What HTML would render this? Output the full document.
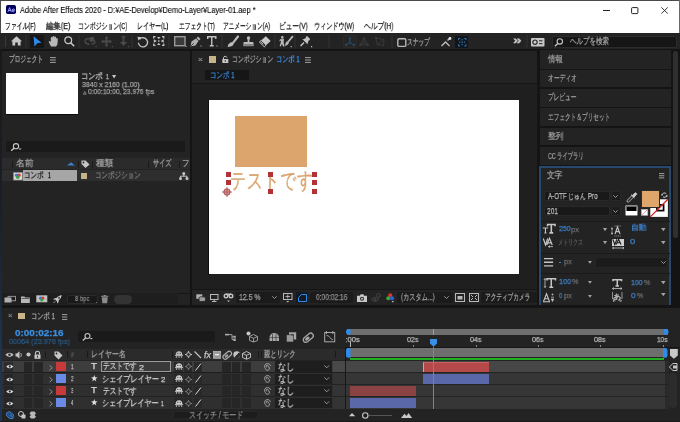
<!DOCTYPE html>
<html lang="ja"><head><meta charset="utf-8">
<style>
*{box-sizing:border-box;margin:0;padding:0}
html,body{width:680px;height:422px;overflow:hidden;background:#141414;font-family:"Liberation Sans",sans-serif;}
.a{position:absolute}
.t{position:absolute;white-space:nowrap;line-height:1;transform-origin:0 0;left:0;top:0;will-change:transform;-webkit-text-stroke:0.25px currentColor}
svg{position:absolute;overflow:visible}
</style></head><body>
<div class="a" style="left:0px;top:0px;width:680px;height:33px;background:#fff;"></div>
<div class="a" style="left:0px;top:0px;width:680px;height:1px;background:#4a4a4a;"></div>
<div class="a" style="left:0px;top:0px;width:1px;height:33px;background:#4a4a4a;"></div>
<div class="a" style="left:678.5px;top:0px;width:1.5px;height:33px;background:#6a6a6a;"></div>
<div class="a" style="left:602.6px;top:9.5px;width:7px;height:1px;background:#222;"></div>
<svg style="left:631.3px;top:6.5px;" width="7.5" height="7" viewBox="0 0 7.5 7"><rect x="0.6" y="0.6" width="6.3" height="6" rx="0.8" fill="none" stroke="#222" stroke-width="1"></rect></svg>
<svg style="left:660.8px;top:6.5px;" width="7.2" height="7" viewBox="0 0 7.2 7"><path d="M0.4 0.4 L6.8 6.6 M6.8 0.4 L0.4 6.6" stroke="#222" stroke-width="0.9"></path></svg>
<div class="a" style="left:6px;top:4.7px;width:10.3px;height:9.7px;background:#00005b;border-radius:1.8px"></div>
<svg style="left:6px;top:4.7px;" width="10" height="10" viewBox="0 0 10 10"><path d="M1.9 6.9 L3.6 2.6 L5.3 6.9 M2.5 5.5 H4.7" stroke="#9d9dff" stroke-width="1" fill="none"></path><path d="M6 5.4 H8.7 A1.35 1.45 0 1 0 8.22 6.51" stroke="#9d9dff" stroke-width="0.9" fill="none"></path></svg>
<div class="t" style="color: rgb(0, 0, 0); -webkit-text-stroke: 0.1px rgb(0, 0, 0); font-size: 8.6px; left: 20px; top: 6.0201px; transform: scaleX(0.856327);">Adobe After Effects 2020 - D:¥AE-Develop¥Demo-Layer¥Layer-01.aep *</div>
<div class="t" style="color: rgb(26, 26, 26); font-size: 8.8px; left: 5.42927px; top: 21.5508px; transform: scaleX(0.648559);">ファイル(F)</div>
<div class="t" style="color: rgb(26, 26, 26); font-size: 8.8px; left: 45.7723px; top: 21.5508px; transform: scaleX(0.82205);">編集(E)</div>
<div class="t" style="color: rgb(26, 26, 26); font-size: 8.8px; left: 78.1351px; top: 21.5508px; transform: scaleX(0.655187);">コンポジション(C)</div>
<div class="t" style="color: rgb(26, 26, 26); font-size: 8.8px; left: 137.175px; top: 21.5508px; transform: scaleX(0.669873);">レイヤー(L)</div>
<div class="t" style="color: rgb(26, 26, 26); font-size: 8.8px; left: 178.608px; top: 21.5508px; transform: scaleX(0.635972);">エフェクト(T)</div>
<div class="t" style="color: rgb(26, 26, 26); font-size: 8.8px; left: 223.446px; top: 21.5508px; transform: scaleX(0.629792);">アニメーション(A)</div>
<div class="t" style="color: rgb(26, 26, 26); font-size: 8.8px; left: 278.758px; top: 21.5508px; transform: scaleX(0.742901);">ビュー(V)</div>
<div class="t" style="color: rgb(26, 26, 26); font-size: 8.8px; left: 314.284px; top: 21.5508px; transform: scaleX(0.677974);">ウィンドウ(W)</div>
<div class="t" style="color: rgb(26, 26, 26); font-size: 8.8px; left: 364px; top: 21.5508px; transform: scaleX(0.749789);">ヘルプ(H)</div>
<div class="a" style="left:0px;top:33px;width:680px;height:16px;background:#232323;"></div>
<div class="a" style="left:4.5px;top:36px;width:1.5px;height:11px;background:#3a3a3a;"></div>
<div class="a" style="left:25px;top:35px;width:2px;height:12.5px;background:#2a2a2a;"></div>
<div class="a" style="left:78px;top:35px;width:2px;height:12.5px;background:#2a2a2a;"></div>
<div class="a" style="left:131px;top:35px;width:2px;height:12.5px;background:#2a2a2a;"></div>
<div class="a" style="left:168px;top:35px;width:2px;height:12.5px;background:#2a2a2a;"></div>
<div class="a" style="left:221px;top:35px;width:2px;height:12.5px;background:#2a2a2a;"></div>
<div class="a" style="left:274px;top:35px;width:2px;height:12.5px;background:#2a2a2a;"></div>
<div class="a" style="left:294px;top:35px;width:2px;height:12.5px;background:#2a2a2a;"></div>
<div class="a" style="left:328px;top:35px;width:2px;height:12.5px;background:#2a2a2a;"></div>
<div class="a" style="left:391px;top:35px;width:2px;height:12.5px;background:#2a2a2a;"></div>
<div class="a" style="left:526px;top:35px;width:2px;height:12.5px;background:#2a2a2a;"></div>
<div class="a" style="left:30px;top:34.5px;width:14px;height:13px;background:#161616;border-radius:1px"></div>
<div class="a" style="left:343px;top:35px;width:13.5px;height:13px;background:#262626;border-radius:2px;border:1px solid #2c2c2c"></div>
<div class="a" style="left:455px;top:35.5px;width:12.5px;height:12px;background:#0e151d;border-radius:1px"></div>
<svg style="left:11px;top:36px;" width="12" height="10" viewBox="0 0 12 10"><path d="M5.5 0.3 L11 5.2 L9.6 5.2 L9.6 9.6 L6.8 9.6 L6.8 6.5 L4.2 6.5 L4.2 9.6 L1.4 9.6 L1.4 5.2 L0 5.2 Z" fill="#c6c6c6"></path></svg>
<svg style="left:33px;top:36px;" width="9" height="11" viewBox="0 0 9 11"><path d="M0.5 0.3 L8.5 6.8 L4.6 6.9 L1.5 10.5 Z" fill="#2d8ceb"></path></svg>
<svg style="left:47.5px;top:36px;" width="11" height="11" viewBox="0 0 11 11"><path d="M3 10.5 L1 6.5 Q0.3 5.3 1.3 5 Q2 4.9 2.8 6 L2.8 2 Q2.8 1 3.6 1 Q4.3 1 4.4 2 L4.5 0.9 Q4.6 0 5.4 0 Q6.2 0 6.2 1 L6.3 1.2 Q6.5 0.4 7.2 0.5 Q8 0.6 8 1.5 L8.1 2.5 Q8.4 1.8 9.1 1.9 Q9.9 2.1 9.8 3 L9.6 7 Q9.4 9.5 8 10.5 Z" fill="#b8b8b8"></path></svg>
<svg style="left:64px;top:36px;" width="11" height="11" viewBox="0 0 11 11"><circle cx="4.2" cy="4.2" r="3.4" fill="none" stroke="#c6c6c6" stroke-width="1.3"></circle><path d="M6.6 6.6 L10.2 10.2" stroke="#c6c6c6" stroke-width="1.5"></path></svg>
<svg style="left:83.5px;top:35.5px;" width="13" height="11.5" viewBox="0 0 13 11.5"><circle cx="7.8" cy="3.3" r="2.6" fill="#4a4a4a"></circle><path d="M5 2.5 Q1 2.5 1 5 Q1 7.5 5 8 M7.5 8.2 Q11 8 11 6 Q11 5 10 4.5" fill="none" stroke="#4a4a4a" stroke-width="1.3"></path><path d="M3.5 6.8 L5.8 8 L3.8 9.6 Z" fill="#4a4a4a"></path><rect x="11.5" y="10" width="1.2" height="1.2" fill="#4a4a4a"></rect></svg>
<svg style="left:100.5px;top:35.5px;" width="12" height="11.5" viewBox="0 0 12 11.5"><path d="M5.5 1.5 V9.5 M1.5 5.5 H9.5" stroke="#4a4a4a" stroke-width="1.8"></path><path d="M5.5 0 L7.3 2.2 H3.7 Z M5.5 11 L7.3 8.8 H3.7 Z M0 5.5 L2.2 3.7 V7.3 Z M11 5.5 L8.8 3.7 V7.3 Z" fill="#4a4a4a"></path><rect x="10.8" y="10" width="1.2" height="1.2" fill="#4a4a4a"></rect></svg>
<svg style="left:118.5px;top:35.5px;" width="11" height="11.5" viewBox="0 0 11 11.5"><path d="M4.5 0.8 V7" stroke="#4a4a4a" stroke-width="1.8"></path><path d="M2.5 0.8 H6.5" stroke="#4a4a4a" stroke-width="1.2"></path><path d="M0.8 6 H8.2 L4.5 9.8 Z" fill="#4a4a4a"></path><rect x="9" y="10" width="1.2" height="1.2" fill="#4a4a4a"></rect></svg>
<svg style="left:137px;top:36px;" width="12" height="11" viewBox="0 0 12 11"><path d="M2.6 3.2 A4.6 4.6 0 1 1 1.4 6.8" fill="none" stroke="#c6c6c6" stroke-width="1.3"></path><path d="M0.5 0.8 L4.6 1.2 L1.3 4.6 Z" fill="#c6c6c6"></path></svg>
<svg style="left:153px;top:36px;" width="11.5" height="10" viewBox="0 0 11.5 10"><path d="M0.7 2.5 V0.7 H2.5 M9 0.7 H10.8 V2.5 M0.7 7.5 V9.3 H2.5 M9 9.3 H10.8 V7.5" stroke="#c4c4c4" stroke-width="1.2" fill="none"></path><path d="M5.75 3.2 L4 1 H7.5 Z M5.75 6.8 L4 9 H7.5 Z M3.8 5 L0.8 3.3 V6.7 Z M7.7 5 L10.7 3.3 V6.7 Z" fill="#c4c4c4"></path><rect x="5" y="4.3" width="1.5" height="1.4" fill="#c4c4c4"></rect></svg>
<svg style="left:173.5px;top:36px;" width="13" height="11" viewBox="0 0 13 11"><rect x="0.7" y="0.7" width="10.3" height="9" fill="#3a3a3a" stroke="#9a9a9a" stroke-width="1.4"></rect><rect x="11.6" y="9.8" width="1" height="1" fill="#c6c6c6"></rect></svg>
<svg style="left:190px;top:36px;" width="12" height="11" viewBox="0 0 12 11"><path d="M0.5 10.5 L1.5 5.5 L6 2.5 L8.5 5 L5.5 9.5 Z" fill="#b0b0b0"></path><path d="M6.5 2 L8 0.5 L10.5 3 L9 4.5 Z" fill="#b0b0b0"></path><path d="M0.8 10.2 L3.8 7.2" stroke="#232323" stroke-width="0.8"></path><rect x="10.5" y="9.5" width="1" height="1" fill="#c6c6c6"></rect></svg>
<svg style="left:207px;top:36px;" width="11" height="11" viewBox="0 0 11 11"><path d="M0.7 3 V0.7 H8.8 V3 M4.75 0.7 V9.8 M2.8 9.8 H6.7" stroke="#c0c0c0" stroke-width="1.4" fill="none"></path><rect x="9.5" y="9.5" width="1" height="1" fill="#c6c6c6"></rect></svg>
<svg style="left:226.5px;top:35.5px;" width="12" height="11" viewBox="0 0 12 11"><path d="M11 0.5 L6.2 6.6" stroke="#bcbcbc" stroke-width="2.2" stroke-linecap="round"></path><path d="M5 6 L6.8 7.6 Q6.5 10 3.8 10.6 L0.5 11 L1.6 8.2 Q2.8 6.3 5 6 Z" fill="#bcbcbc"></path></svg>
<svg style="left:243px;top:35.5px;" width="11" height="10.5" viewBox="0 0 11 10.5"><circle cx="5.5" cy="2" r="1.7" fill="#bcbcbc"></circle><path d="M4.6 3 H6.4 V6 H4.6 Z" fill="#bcbcbc"></path><path d="M0.8 6 H10.2 L10.8 8.4 H0.2 Z" fill="#bcbcbc"></path><rect x="0.2" y="8.4" width="10.6" height="1.8" fill="#8a8a8a"></rect></svg>
<svg style="left:258.5px;top:35.5px;" width="12" height="11" viewBox="0 0 12 11"><path d="M6.8 0.3 L11.7 5 L5.3 10.8 L0.4 6.1 Z" fill="#c8c8c8"></path><path d="M2.2 4.4 L7.1 9.1 L5.3 10.8 L0.4 6.1 Z" fill="#232323" stroke="#c8c8c8" stroke-width="0.9"></path><path d="M1.8 5.8 L4.3 8.2" stroke="#c8c8c8" stroke-width="0.9"></path></svg>
<svg style="left:278.5px;top:35.5px;" width="15" height="11.5" viewBox="0 0 15 11.5"><circle cx="3.3" cy="1.4" r="1.3" fill="#b8b8b8"></circle><path d="M1 3.2 L5 3 L4.6 6.3 L5.6 10.5 L4 10.5 L3 7.8 L1.8 10.5 L0.6 10 L1.8 6.5 L1.9 4.6 L0.2 5.6 Z" fill="#b8b8b8"></path><path d="M13.5 0.6 L9.2 5.8" stroke="#b8b8b8" stroke-width="1.8" stroke-linecap="round"></path><path d="M8.3 5.3 L9.9 6.6 Q9.8 8.8 7.4 9.4 L5.8 9.8 L6.5 7.6 Q7 5.8 8.3 5.3 Z" fill="#b8b8b8"></path><rect x="11.6" y="10" width="1.2" height="1.2" fill="#b8b8b8"></rect></svg>
<svg style="left:299.5px;top:35.5px;" width="13" height="11.5" viewBox="0 0 13 11.5"><path d="M5.8 0.5 Q6.8 -0.2 7.6 0.6 L9.6 2.6 Q10.4 3.4 9.6 4.2 L8.6 4.6 L7.6 7.4 L7.8 8.6 L2.2 3 L3.4 3.2 L6 2 Z" fill="#c4c4c4"></path><path d="M4 6.5 L0.5 10" stroke="#c4c4c4" stroke-width="1.4"></path><rect x="11" y="10" width="1.2" height="1.2" fill="#c4c4c4"></rect></svg>
<svg style="left:344.5px;top:36.5px;" width="10" height="9" viewBox="0 0 10 9"><path d="M5 1 V5.5 L1 8 M5 5.5 L9 8" stroke="#28507a" stroke-width="0.9" fill="none"></path><circle cx="5" cy="1.2" r="1" fill="#28507a"></circle><circle cx="1" cy="8" r="1" fill="#28507a"></circle><circle cx="9" cy="8" r="1" fill="#28507a"></circle><circle cx="5" cy="5.5" r="0.8" fill="#28507a"></circle></svg>
<svg style="left:359px;top:36.5px;" width="10" height="9" viewBox="0 0 10 9"><path d="M5 1 L1 8 H9 Z M5 1 V5.5 L1 8 M5 5.5 L9 8" stroke="#3e3e3e" stroke-width="0.8" fill="none"></path><circle cx="5" cy="1.2" r="1" fill="#3e3e3e"></circle><circle cx="1" cy="8" r="1" fill="#3e3e3e"></circle><circle cx="9" cy="8" r="1" fill="#3e3e3e"></circle></svg>
<svg style="left:374.5px;top:36.5px;" width="10" height="9" viewBox="0 0 10 9"><path d="M1 1 L9 2.5 L8.5 8.5 L2 7.5 Z M2 7.5 L9 2.5" stroke="#3e3e3e" stroke-width="0.8" fill="none"></path><circle cx="1" cy="1" r="1" fill="#3e3e3e"></circle></svg>
<svg style="left:396.5px;top:37.5px;" width="10" height="9" viewBox="0 0 10 9"><rect x="0.8" y="0.8" width="8" height="7.6" rx="1.2" fill="none" stroke="#b8b8b8" stroke-width="1.4"></rect></svg>
<div class="t" style="color: rgb(163, 163, 163); font-size: 8.8px; left: 407.11px; top: 37.5508px; transform: scaleX(0.633198);">スナップ</div>
<svg style="left:441px;top:37px;" width="11" height="10" viewBox="0 0 11 10"><path d="M0.5 9 L4.5 5 L8.5 9" stroke="#c0c0c0" stroke-width="1.3" fill="none"></path><path d="M6.5 3.5 L9.5 0.5" stroke="#c0c0c0" stroke-width="1.5"></path><circle cx="9" cy="1.5" r="1.4" fill="#e0e0e0"></circle></svg>
<svg style="left:457.5px;top:37.5px;" width="8.5" height="8.5" viewBox="0 0 8.5 8.5"><path d="M0.5 2.2 V0.5 H2.2 M6.3 0.5 H8 V2.2 M0.5 6.3 V8 H2.2 M6.3 8 H8 V6.3" stroke="#3a78b4" stroke-width="1" fill="none"></path><path d="M3.3 1.8 H5.2 M3.3 6.7 H5.2 M1.8 3.3 V5.2 M6.7 3.3 V5.2" stroke="#3a78b4" stroke-width="0.8"></path><rect x="3.6" y="3.6" width="1.3" height="1.3" fill="#3a78b4"></rect></svg>
<div class="t" style="color: rgb(200, 200, 200); font-weight: bold; font-size: 11px; left: 513.375px; top: 34.6885px; transform: scaleX(1.42046);">»</div>
<svg style="left:530.5px;top:38px;" width="14" height="9" viewBox="0 0 14 9"><rect x="0" y="0" width="13.5" height="8.5" rx="1" fill="#c8c8c8"></rect><circle cx="4" cy="4.2" r="2.2" fill="none" stroke="#232323" stroke-width="1.2"></circle><rect x="8" y="2.3" width="3.5" height="1" fill="#232323"></rect><rect x="8" y="5.2" width="3.5" height="1" fill="#232323"></rect></svg>
<div class="a" style="left:552px;top:36px;width:125px;height:11.5px;background:#161616;border:1px solid #2b2b2b;border-radius:2px"></div>
<svg style="left:554px;top:38px;" width="10" height="9" viewBox="0 0 10 9"><circle cx="5.8" cy="3.4" r="2.7" fill="none" stroke="#c6c6c6" stroke-width="1.1"></circle><path d="M3.8 5.4 L0.8 8.3" stroke="#c6c6c6" stroke-width="1.4"></path></svg>
<div class="t" style="color: rgb(163, 163, 163); font-size: 9.2px; left: 570px; top: 37.2122px; transform: scaleX(0.721033);">ヘルプを検索</div>
<div class="a" style="left:1px;top:51px;width:189px;height:254px;background:#232323;"></div>
<div class="t" style="color: rgb(163, 163, 163); font-size: 9px; left: 9.04542px; top: 54.8815px; transform: scaleX(0.631357);">プロジェクト</div>
<svg style="left:50px;top:57px;" width="6" height="6" viewBox="0 0 6 6"><path d="M0 0.6 H5.8 M0 3 H5.8 M0 5.4 H5.8" stroke="#a3a3a3" stroke-width="1"></path></svg>
<div class="a" style="left:6px;top:73px;width:72px;height:40.6px;background:#ffffff;box-shadow:0 1px 0 #0c0c0c"></div>
<div class="t" style="color: rgb(198, 198, 198); font-size: 8.8px; left: 81.0437px; top: 71.5508px; transform: scaleX(0.800256);">コンポ</div>
<div class="t" style="color: rgb(198, 198, 198); font-size: 7.4px; left: 105.85px; top: 72.7359px; transform: scaleX(0.675676);">1</div>
<svg style="left:111.5px;top:74.5px;" width="4.2" height="3.6" viewBox="0 0 4.2 3.6"><path d="M0 0 H4.2 L2.1 3.6 Z" fill="#c6c6c6"></path></svg>
<div class="t" style="color: rgb(163, 163, 163); font-size: 7.6px; left: 81.8939px; top: 80.5666px; transform: scaleX(0.903892);">3840 x 2160 (1.00)</div>
<div class="t" style="color: rgb(163, 163, 163); font-size: 7.6px; left: 88.4001px; top: 88.1666px; transform: scaleX(0.876516);">0:00:10:00, 23.976 fps</div>
<svg style="left:83.3px;top:90.5px;" width="3.6" height="3.6" viewBox="0 0 3.6 3.6"><path d="M1.8 0.4 L3.3 3.2 H0.3 Z" fill="none" stroke="#a3a3a3" stroke-width="0.7"></path></svg>
<div class="a" style="left:6px;top:141px;width:179px;height:11px;background:#1a1a1a;border-radius:1px"></div>
<svg style="left:9.5px;top:143px;" width="12" height="8" viewBox="0 0 12 8"><circle cx="6" cy="3.2" r="2.6" fill="none" stroke="#c6c6c6" stroke-width="1.1"></circle><path d="M4.2 5 L1.2 7.8" stroke="#c6c6c6" stroke-width="1.4"></path><path d="M8.5 5.5 H11.5 L10 7 Z" fill="#c6c6c6"></path></svg>
<div class="a" style="left:2px;top:158px;width:187.5px;height:11px;background:#2b2b2b;"></div>
<div class="a" style="left:11.5px;top:160.5px;width:1px;height:7px;background:#1a1a1a;"></div>
<div class="a" style="left:78px;top:160.5px;width:1px;height:7px;background:#1a1a1a;"></div>
<div class="a" style="left:92px;top:160.5px;width:1px;height:7px;background:#1a1a1a;"></div>
<div class="a" style="left:148px;top:160.5px;width:1px;height:7px;background:#1a1a1a;"></div>
<div class="a" style="left:179px;top:160.5px;width:1px;height:7px;background:#1a1a1a;"></div>
<div class="t" style="color: rgb(163, 163, 163); font-size: 9px; left: 15.8123px; top: 158.881px; transform: scaleX(0.974359);">名前</div>
<svg style="left:67.2px;top:162.2px;" width="8" height="3.6" viewBox="0 0 8 3.6"><path d="M0 3.5 L4 0.2 L8 3.5 Z" fill="#3b7fc8"></path></svg>
<svg style="left:80.5px;top:160px;" width="9" height="8" viewBox="0 0 9 8"><path d="M0.5 0.5 H4.5 L8.5 4.5 L4.5 8 L0.5 4 Z" fill="#c6c6c6"></path><circle cx="2.5" cy="2.5" r="0.9" fill="#2b2b2b"></circle></svg>
<div class="t" style="color: rgb(163, 163, 163); font-size: 9px; left: 95.7px; top: 158.881px; transform: scaleX(0.953187);">種類</div>
<div class="t" style="color: rgb(163, 163, 163); font-size: 9px; left: 152.755px; top: 158.881px; transform: scaleX(0.680648);">サイズ</div>
<div class="t" style="color: rgb(163, 163, 163); font-size: 9px; left: 182.456px; top: 158.881px; transform: scaleX(0.826211);">フ</div>
<div class="a" style="left:2px;top:169.7px;width:187.5px;height:11.3px;background:#2e2e2e;"></div>
<svg style="left:12.5px;top:171.5px;" width="10" height="8.5" viewBox="0 0 10 8.5"><rect x="0.3" y="0.3" width="9.2" height="7.8" fill="#d8d8d8" stroke="#777" stroke-width="0.6"></rect><circle cx="3.5" cy="3.3" r="1.7" fill="#3a7ad0"></circle><circle cx="6" cy="3.3" r="1.7" fill="#d04040"></circle><circle cx="4.7" cy="5.3" r="1.7" fill="#40a040"></circle></svg>
<div class="a" style="left:22.8px;top:170px;width:54px;height:11px;background:#a6a6a6;"></div>
<div class="t" style="color: rgb(27, 27, 27); font-size: 8.6px; left: 23.8651px; top: 171.32px; transform: scaleX(0.724697);">コンポ</div>
<div class="t" style="color: rgb(27, 27, 27); font-size: 8.2px; left: 47.95px; top: 171.859px; transform: scaleX(0.609756);">1</div>
<div class="a" style="left:81px;top:172.5px;width:6px;height:6.3px;background:#c9b48a;"></div>
<div class="t" style="color: rgb(125, 125, 125); font-size: 9px; left: 94.7225px; top: 170.881px; transform: scaleX(0.724077);">コンポジション</div>
<svg style="left:179px;top:172px;" width="9.5" height="8" viewBox="0 0 9.5 8"><circle cx="4.75" cy="1.5" r="1.5" fill="#c6c6c6"></circle><circle cx="1.5" cy="6.5" r="1.5" fill="#c6c6c6"></circle><circle cx="8" cy="6.5" r="1.5" fill="#c6c6c6"></circle><path d="M4.75 1.5 V4.5 M1.5 6.5 V4.2 H8 V6.5" stroke="#c6c6c6" stroke-width="1" fill="none"></path></svg>
<div class="a" style="left:1px;top:293px;width:177px;height:11px;background:#1e1e1e;"></div>
<div class="a" style="left:178px;top:293px;width:11.7px;height:1px;background:#151515;"></div>
<svg style="left:3.7px;top:295.5px;" width="12" height="7" viewBox="0 0 12 7"><rect x="0.5" y="1.5" width="7" height="5" fill="#b0b0b0"></rect><rect x="4" y="0.3" width="7.5" height="4.5" fill="none" stroke="#b0b0b0" stroke-width="0.8"></rect></svg>
<svg style="left:21.3px;top:295.5px;" width="9" height="7" viewBox="0 0 9 7"><path d="M0 0.5 H3.5 L4.2 1.5 H8.8 V7 H0 Z" fill="#b8b8b8"></path><rect x="0.6" y="2.3" width="7.6" height="0.6" fill="#1e1e1e"></rect></svg>
<svg style="left:36px;top:295.3px;" width="11.5" height="7.5" viewBox="0 0 11.5 7.5"><rect x="0.3" y="0.3" width="11" height="7" fill="#c0c0c0"></rect><circle cx="4.6" cy="3.2" r="1.6" fill="#3a7ad0"></circle><circle cx="6.8" cy="3.2" r="1.6" fill="#d04040"></circle><circle cx="5.7" cy="5" r="1.6" fill="#40a040"></circle></svg>
<svg style="left:53px;top:295px;" width="9" height="8.5" viewBox="0 0 9 8.5"><path d="M8.8 0 Q5.5 0.3 3.3 3 L1 3.4 L0.2 4.6 L2.4 4.8 L4 6.4 L4.2 8.5 L5.4 7.6 L5.8 5.3 Q8.5 3.2 8.8 0 Z" fill="#c4c4c4"></path><circle cx="6" cy="2.8" r="0.9" fill="#232323"></circle><path d="M2.2 6.3 L0.5 8" stroke="#c4c4c4" stroke-width="0.8"></path></svg>
<div class="a" style="left:67px;top:294.5px;width:31px;height:9px;background:#191919;border-radius:2px;border:1px solid #2a2a2a"></div>
<div class="t" style="color: rgb(138, 138, 138); font-size: 7.4px; left: 74.7653px; top: 295.236px; transform: scaleX(0.792818);">8 bpc</div>
<div class="a" style="left:96px;top:301.5px;width:1px;height:1px;background:#777;"></div>
<svg style="left:101px;top:295px;" width="7.5" height="8.5" viewBox="0 0 7.5 8.5"><rect x="0" y="0.8" width="7.5" height="1" fill="#8a8a8a"></rect><rect x="2.5" y="0" width="2.5" height="1" fill="#8a8a8a"></rect><path d="M0.8 2.2 H6.7 L6.2 8.3 H1.3 Z" fill="#8a8a8a"></path></svg>
<div class="a" style="left:114.4px;top:294.5px;width:17.6px;height:9px;background:#333333;border-radius:4.5px"></div>
<div class="a" style="left:192px;top:51px;width:345px;height:254px;background:#232323;"></div>
<div class="a" style="left:192px;top:83.5px;width:345px;height:206px;background:#1f1f1f;"></div>
<div class="a" style="left:192px;top:83px;width:345px;height:1px;background:#161616;"></div>
<div class="t" style="color: rgb(138, 138, 138); font-size: 8px; left: 198.291px; top: 55.528px; transform: scaleX(1.05978);">×</div>
<div class="a" style="left:208.5px;top:56px;width:7.5px;height:6.5px;background:#c9b48a;"></div>
<svg style="left:222px;top:55.5px;" width="6.5" height="7" viewBox="0 0 6.5 7"><path d="M1.5 3 V1.8 A1.8 1.8 0 0 1 5 1.6" fill="none" stroke="#c6c6c6" stroke-width="1"></path><rect x="0.3" y="3" width="6" height="4" fill="#c6c6c6"></rect><rect x="2.8" y="4.2" width="1" height="1.6" fill="#232323"></rect></svg>
<div class="t" style="color: rgb(163, 163, 163); font-size: 9px; left: 232.316px; top: 54.6815px; transform: scaleX(0.654733);">コンポジション</div>
<div class="t" style="color: rgb(58, 142, 230); font-size: 9px; left: 275.571px; top: 54.6815px; transform: scaleX(0.688091);">コンポ 1</div>
<svg style="left:304.7px;top:57px;" width="6" height="6" viewBox="0 0 6 6"><path d="M0 0.6 H5.8 M0 3 H5.8 M0 5.4 H5.8" stroke="#a3a3a3" stroke-width="1"></path></svg>
<div class="a" style="left:205px;top:69.5px;width:44px;height:10.5px;background:#161616;"></div>
<div class="t" style="color: rgb(58, 132, 216); font-size: 8.6px; left: 210.275px; top: 70.7201px; transform: scaleX(0.716951);">コンポ 1</div>
<div class="a" style="left:208px;top:99.5px;width:1.5px;height:175px;background:#0e0e0e;"></div>
<div class="a" style="left:209.3px;top:100px;width:310px;height:174px;background:#ffffff;"></div>
<div class="a" style="left:234.5px;top:116px;width:72px;height:50.5px;background:#dca56d;"></div>
<div class="t" style="color: rgb(217, 163, 108); -webkit-text-stroke: 0.3px rgb(217, 163, 108); font-size: 22px; left: 230.241px; top: 170.377px; transform: scaleX(0.726723);">テストです</div>
<div class="a" style="left:226px;top:171.5px;width:5px;height:5px;background:#b23236;"></div>
<div class="a" style="left:226px;top:180px;width:5px;height:5px;background:#b23236;"></div>
<div class="a" style="left:268.4px;top:171.5px;width:5px;height:5px;background:#b23236;"></div>
<div class="a" style="left:268.4px;top:188.8px;width:5px;height:5px;background:#b23236;"></div>
<div class="a" style="left:311.8px;top:171.5px;width:5px;height:5px;background:#b23236;"></div>
<div class="a" style="left:311.8px;top:180px;width:5px;height:5px;background:#b23236;"></div>
<div class="a" style="left:311.8px;top:189px;width:5px;height:5px;background:#b23236;"></div>
<svg style="left:222px;top:186.5px;" width="11" height="10" viewBox="0 0 11 10"><circle cx="5" cy="5" r="3.2" fill="#d7a0a0" stroke="#a84a4a" stroke-width="1"></circle><path d="M0 5 H10 M5 0 V10" stroke="#a84a4a" stroke-width="0.8"></path></svg>
<div class="a" style="left:192px;top:289px;width:345px;height:1px;background:#161616;"></div>
<svg style="left:196px;top:293.5px;" width="10" height="8" viewBox="0 0 10 8"><rect x="0.3" y="0.3" width="6" height="4.5" fill="#b0b0b0"></rect><rect x="3" y="2.8" width="6.5" height="4.7" rx="1.5" fill="#9a9a9a" stroke="#232323" stroke-width="0.8"></rect></svg>
<svg style="left:210px;top:293.5px;" width="8.5" height="8" viewBox="0 0 8.5 8"><rect x="0.5" y="0.5" width="7.5" height="5" fill="none" stroke="#b8b8b8" stroke-width="1"></rect><path d="M4.25 5.5 V7 M2 7.5 H6.5" stroke="#b8b8b8" stroke-width="1"></path></svg>
<svg style="left:223px;top:293px;" width="11" height="10" viewBox="0 0 11 10"><circle cx="3" cy="3" r="2.5" fill="#c0c0c0"></circle><circle cx="8" cy="3" r="2.5" fill="#c0c0c0"></circle><rect x="3" y="0.5" width="5" height="2" fill="#c0c0c0"></rect><circle cx="3" cy="3" r="1.1" fill="#232323"></circle><circle cx="8" cy="3" r="1.1" fill="#232323"></circle><path d="M4 7.5 H7 L5.5 9 Z" fill="#c0c0c0"></path></svg>
<div class="a" style="left:236px;top:291.5px;width:44px;height:11.5px;background:#1b1b1b;border-radius:2px"></div>
<div class="t" style="color: rgb(163, 163, 163); font-size: 8.2px; left: 239.317px; top: 293.859px; transform: scaleX(0.841567);">12.5 %</div>
<svg style="left:272px;top:295.5px;" width="5" height="3" viewBox="0 0 5 3"><path d="M0.3 0.3 L2.5 2.5 L4.7 0.3" stroke="#a3a3a3" stroke-width="0.9" fill="none"></path></svg>
<svg style="left:283px;top:293px;" width="9.5" height="10" viewBox="0 0 9.5 10"><rect x="0.5" y="0.5" width="8.5" height="6" fill="none" stroke="#b8b8b8" stroke-width="1"></rect><path d="M4.75 1.5 V5.5 M2.5 3.5 H7" stroke="#b8b8b8" stroke-width="0.9"></path><path d="M3.2 8 H6.3 L4.75 9.5 Z" fill="#b8b8b8"></path></svg>
<div class="a" style="left:296px;top:292px;width:11.6px;height:10.6px;background:#121a24;"></div>
<svg style="left:297.5px;top:293.5px;" width="9" height="8" viewBox="0 0 9 8"><path d="M0.5 7.5 V3.5 L3.5 0.5 H8.5 V7.5 Z" fill="none" stroke="#2d8ceb" stroke-width="1"></path></svg>
<div class="a" style="left:309.7px;top:291.5px;width:43.3px;height:11.5px;background:#1b1b1b;border-radius:2px"></div>
<div class="t" style="color: rgb(142, 142, 142); font-size: 8.2px; left: 315.701px; top: 293.859px; transform: scaleX(0.808575);">0:00:02:16</div>
<svg style="left:356.5px;top:293.5px;" width="10" height="8" viewBox="0 0 10 8"><path d="M0 1.8 H2.8 L3.8 0.3 H6.2 L7.2 1.8 H10 V8 H0 Z" fill="#c8c8c8"></path><circle cx="5" cy="4.8" r="2" fill="#232323"></circle><circle cx="5" cy="4.8" r="1" fill="#c8c8c8"></circle></svg>
<svg style="left:370.5px;top:292.5px;" width="10" height="9.5" viewBox="0 0 10 9.5"><path d="M0.5 6.5 Q4 2.5 7.5 6.5 Q4 10.2 0.5 6.5 Z" fill="none" stroke="#474747" stroke-width="1"></path><circle cx="4" cy="6.5" r="1.1" fill="#474747"></circle><circle cx="7.5" cy="2.5" r="1.8" fill="none" stroke="#474747" stroke-width="1"></circle></svg>
<svg style="left:385.5px;top:292.5px;" width="8.5" height="10" viewBox="0 0 8.5 10"><circle cx="4.2" cy="2.3" r="2" fill="#e03030"></circle><circle cx="2.3" cy="5.3" r="2" fill="#30b030"></circle><circle cx="6.1" cy="5.3" r="2" fill="#3060e0"></circle><path d="M5.5 8 H8 L6.75 9.5 Z" fill="#c0c0c0"></path></svg>
<div class="a" style="left:397px;top:291.5px;width:55.5px;height:11.5px;background:#1b1b1b;border-radius:2px"></div>
<div class="t" style="color: rgb(163, 163, 163); font-size: 8.6px; left: 401.244px; top: 292.72px; transform: scaleX(0.689187);">(カスタム...)</div>
<svg style="left:444.3px;top:295.5px;" width="5" height="3" viewBox="0 0 5 3"><path d="M0.3 0.3 L2.5 2.5 L4.7 0.3" stroke="#a3a3a3" stroke-width="0.9" fill="none"></path></svg>
<svg style="left:455px;top:293px;" width="10" height="9" viewBox="0 0 10 9"><rect x="0.5" y="0.5" width="9" height="8" fill="none" stroke="#b8b8b8" stroke-width="1"></rect><rect x="2.5" y="3" width="5" height="3.5" fill="#b8b8b8"></rect></svg>
<svg style="left:469px;top:293px;" width="10" height="9" viewBox="0 0 10 9"><rect x="0.5" y="0.5" width="9" height="8" fill="none" stroke="#b8b8b8" stroke-width="1"></rect><path d="M2 2 L4 4 M8 2 L6 4 M2 7 L4 5 M8 7 L6 5" stroke="#b8b8b8" stroke-width="1"></path></svg>
<div class="a" style="left:481.3px;top:291.5px;width:55.7px;height:11.5px;background:#1b1b1b;border-radius:2px"></div>
<div class="t" style="color: rgb(163, 163, 163); font-size: 9px; left: 484.835px; top: 292.882px; transform: scaleX(0.628081);">アクティブカメラ</div>
<div class="a" style="left:540px;top:50px;width:131px;height:18.5px;background:#232323;"></div>
<div class="t" style="color: rgb(154, 154, 154); font-size: 9px; left: 548.22px; top: 54.8315px; transform: scaleX(0.815187);">情報</div>
<div class="a" style="left:540px;top:69.8px;width:131px;height:17.5px;background:#232323;"></div>
<div class="t" style="color: rgb(154, 154, 154); font-size: 9px; left: 547.711px; top: 74.1315px; transform: scaleX(0.641723);">オーディオ</div>
<div class="a" style="left:540px;top:89px;width:131px;height:17.599999999999994px;background:#232323;"></div>
<div class="t" style="color: rgb(154, 154, 154); font-size: 9px; left: 547.546px; top: 93.3815px; transform: scaleX(0.630081);">プレビュー</div>
<div class="a" style="left:540px;top:108.3px;width:131px;height:17.900000000000006px;background:#232323;"></div>
<div class="t" style="color: rgb(154, 154, 154); font-size: 9px; left: 547.604px; top: 112.832px; transform: scaleX(0.629085);">エフェクト＆プリセット</div>
<div class="a" style="left:540px;top:127.8px;width:131px;height:17.60000000000001px;background:#232323;"></div>
<div class="t" style="color: rgb(154, 154, 154); font-size: 9px; left: 547.847px; top: 132.181px; transform: scaleX(0.849331);">整列</div>
<div class="a" style="left:540px;top:147.2px;width:131px;height:17.600000000000023px;background:#232323;"></div>
<div class="t" style="color: rgb(154, 154, 154); font-size: 9px; left: 547.732px; top: 151.582px; transform: scaleX(0.594673);">CC ライブラリ</div>
<div class="a" style="left:672.5px;top:51px;width:5.8px;height:187px;background:#2f2f2f;border-radius:3px"></div>
<div class="a" style="left:539px;top:166px;width:132px;height:139px;background:#232323;border:2px solid #28496e;border-bottom:none"></div>
<div class="t" style="color: rgb(163, 163, 163); font-size: 9px; left: 547.447px; top: 170.982px; transform: scaleX(0.847652);">文字</div>
<svg style="left:659px;top:173px;" width="5.5" height="5.5" viewBox="0 0 5.5 5.5"><path d="M0 0.6 H5.3 M0 2.75 H5.3 M0 4.9 H5.3" stroke="#a3a3a3" stroke-width="1"></path></svg>
<div class="a" style="left:544.4px;top:190.6px;width:65.6px;height:10.4px;background:#191919;border:1px solid #282828;border-radius:2px"></div>
<div class="a" style="left:611.2px;top:190.6px;width:10px;height:10.4px;background:#1c1c1c;border:1px solid #282828;border-radius:2px"></div>
<div class="t" style="color: rgb(192, 192, 192); font-size: 8.4px; left: 547.6px; top: 191.889px; transform: scaleX(0.740465);">A-OTF じゅん Pro</div>
<div class="a" style="left:544.4px;top:205.9px;width:65.6px;height:10.4px;background:#191919;border:1px solid #282828;border-radius:2px"></div>
<div class="a" style="left:611.2px;top:205.9px;width:10px;height:10.4px;background:#1c1c1c;border:1px solid #282828;border-radius:2px"></div>
<div class="t" style="color: rgb(192, 192, 192); font-size: 8.4px; left: 547.269px; top: 206.889px; transform: scaleX(0.78744);">201</div>
<svg style="left:613px;top:194.5px;" width="5" height="3" viewBox="0 0 5 3"><path d="M0.3 0.3 L2.5 2.5 L4.7 0.3" stroke="#a3a3a3" stroke-width="0.9" fill="none"></path></svg>
<svg style="left:613px;top:210px;" width="5" height="3" viewBox="0 0 5 3"><path d="M0.3 0.3 L2.5 2.5 L4.7 0.3" stroke="#a3a3a3" stroke-width="0.9" fill="none"></path></svg>
<svg style="left:625.5px;top:191.5px;" width="11.5" height="11" viewBox="0 0 11.5 11"><path d="M1.2 9.8 L0.9 8.6 L6 3.5 L7.6 5.1 L2.5 10.2 Z" fill="none" stroke="#c8c8c8" stroke-width="0.9"></path><path d="M5.2 2.6 L8.5 5.9 M6.3 3.6 L9 0.9 A1.3 1.3 0 0 1 10.6 2.5 L7.9 5.2 Z" stroke="#c8c8c8" stroke-width="1" fill="#c8c8c8"></path></svg>
<div class="a" style="left:624.6px;top:205.3px;width:13.2px;height:11.2px;background:#ffffff;border:1px solid #8a8a8a;border-radius:1.5px"></div>
<div class="a" style="left:625.6px;top:206.3px;width:11.2px;height:4.6px;background:#000000;border:1px solid #6a6a6a;border-bottom:none"></div>
<svg style="left:649.9px;top:198.7px;" width="18.2" height="18.2" viewBox="0 0 18.2 18.2"><rect x="0.3" y="0.3" width="17.6" height="17.6" fill="#fff"></rect><rect x="6.9" y="5.9" width="6.7" height="5.7" fill="none" stroke="#000" stroke-width="1.7"></rect><path d="M0.3 17.9 L17.9 0.3" stroke="#d42020" stroke-width="1.3"></path></svg>
<div class="a" style="left:641.1px;top:190px;width:18.7px;height:17.8px;background:#dfa66c;border:1px solid #2a2a2a"></div>
<svg style="left:641.1px;top:209px;" width="7.1" height="6.7" viewBox="0 0 7.1 6.7"><rect x="0.3" y="0.3" width="6.5" height="6.1" fill="#fff" stroke="#aaa" stroke-width="0.6"></rect><path d="M0.5 6.3 L6.6 0.5" stroke="#e08080" stroke-width="0.8"></path></svg>
<svg style="left:661px;top:192px;" width="6.8" height="5.6" viewBox="0 0 6.8 5.6"><path d="M1 2.8 A2.6 2.6 0 0 1 5.2 1.6" fill="none" stroke="#c8c8c8" stroke-width="1"></path><path d="M0 2.2 L2 2.2 L1 4.2 Z M4.5 3.5 L6.8 3.3 L6 5.6 Z" fill="#c8c8c8"></path><path d="M5.7 3.6 A2.6 2.6 0 0 1 2 5" fill="none" stroke="#c8c8c8" stroke-width="1"></path></svg>
<div class="a" style="left:541px;top:221px;width:129px;height:1px;background:#1a1a1a;"></div>
<div class="a" style="left:541px;top:252.5px;width:129px;height:1px;background:#1a1a1a;"></div>
<div class="a" style="left:541px;top:273px;width:129px;height:1px;background:#1a1a1a;"></div>
<svg style="left:543px;top:224px;" width="12.5" height="9.5" viewBox="0 0 12.5 9.5"><path d="M0.3 4.6 V4 H4.6 V4.6 M2.45 4 V9 M1.4 9 H3.5" stroke="#c6c6c6" stroke-width="1.1" fill="none"></path><path d="M4.6 2.3 V0.5 H12 V2.3 M8.3 0.5 V8.9 M6.4 8.9 H10.2" stroke="#c6c6c6" stroke-width="1.6" fill="none"></path></svg>
<div class="t" style="color: rgb(63, 128, 200); font-size: 7.6px; left: 558.652px; top: 224.767px; transform: scaleX(0.914722);">250</div>
<div class="t" style="color: rgb(110, 110, 110); font-size: 7.6px; left: 571.344px; top: 225.567px; transform: scaleX(1.0007);">px</div>
<svg style="left:602.6px;top:227.7px;" width="4.1" height="3.2" viewBox="0 0 4.1 3.2"><path d="M0 0 H4.1 L2.05 3.2 Z" fill="#a3a3a3"></path></svg>
<svg style="left:660.8px;top:227.7px;" width="4.6" height="3.2" viewBox="0 0 4.6 3.2"><path d="M0 0 H4.6 L2.3 3.2 Z" fill="#a3a3a3"></path></svg>
<svg style="left:602.6px;top:241.1px;" width="4.1" height="3.2" viewBox="0 0 4.1 3.2"><path d="M0 0 H4.1 L2.05 3.2 Z" fill="#a3a3a3"></path></svg>
<svg style="left:660.8px;top:241.1px;" width="4.6" height="3.2" viewBox="0 0 4.6 3.2"><path d="M0 0 H4.6 L2.3 3.2 Z" fill="#a3a3a3"></path></svg>
<svg style="left:610.8px;top:224.5px;" width="10.5" height="11.8" viewBox="0 0 10.5 11.8"><path d="M4 9 L6.5 2 L9 9 M4.9 6.6 H8.1" stroke="#c6c6c6" stroke-width="1.1" fill="none"></path><path d="M3.5 1 H9.8 M3.5 11 H9.8" stroke="#c6c6c6" stroke-width="0.7" stroke-dasharray="1 0.8"></path><circle cx="1" cy="3.5" r="0.9" fill="#c6c6c6"></circle><circle cx="1" cy="8.5" r="0.9" fill="#c6c6c6"></circle><path d="M1 4 V8" stroke="#c6c6c6" stroke-width="0.5"></path></svg>
<div class="t" style="color: rgb(63, 128, 200); font-size: 8.2px; left: 630.973px; top: 224.259px; transform: scaleX(0.963482);">自動</div>
<svg style="left:543px;top:238.3px;" width="13" height="9.5" viewBox="0 0 13 9.5"><path d="M0.3 0.5 L2.5 7 L4.7 0.5 M3.8 7 L6.5 0.3 L9.2 7 M4.9 4.8 H8.1" stroke="#c6c6c6" stroke-width="1.2" fill="none"></path><path d="M5.5 8.6 H10 M5.5 8.6 L7 7.6 M5.5 8.6 L7 9.6" stroke="#c6c6c6" stroke-width="0.8" fill="none"></path></svg>
<div class="t" style="color: rgb(87, 87, 87); font-size: 8.4px; left: 557.525px; top: 237.889px; transform: scaleX(0.628239);">メトリクス</div>
<div class="a" style="left:611.8px;top:238.5px;width:12px;height:7.3px;background:#d0d0d0;"></div>
<svg style="left:612.3px;top:239.2px;" width="11" height="6" viewBox="0 0 11 6"><path d="M0.8 0.3 L2.8 5.6 L4.8 0.3 M4.2 5.6 L6.6 0.3 L9 5.6 M5.1 3.8 H8.1" stroke="#1e1e1e" stroke-width="1.1" fill="none"></path></svg>
<svg style="left:611.5px;top:246.8px;" width="12.5" height="2" viewBox="0 0 12.5 2"><path d="M0.5 1 H12 M0.5 1 L1.8 0 M0.5 1 L1.8 2 M12 1 L10.7 0 M12 1 L10.7 2" stroke="#c6c6c6" stroke-width="0.8" fill="none"></path></svg>
<div class="t" style="color: rgb(63, 128, 200); font-size: 7.6px; left: 630.118px; top: 238.067px; transform: scaleX(1.23523);">0</div>
<svg style="left:543.9px;top:257.8px;" width="9.1" height="8.5" viewBox="0 0 9.1 8.5"><path d="M0 0.7 H9.1 M0 4.25 H9.1 M0 7.8 H9.1" stroke="#c6c6c6" stroke-width="1.3"></path></svg>
<div class="a" style="left:559.3px;top:262.2px;width:1.7px;height:0.9px;background:#3f80c8;"></div>
<div class="t" style="color: rgb(110, 110, 110); font-size: 7.6px; left: 564.362px; top: 258.067px; transform: scaleX(0.960671);">px</div>
<svg style="left:588px;top:261px;" width="3.9" height="2.8" viewBox="0 0 3.9 2.8"><path d="M0 0 H3.9 L1.95 2.8 Z" fill="#a3a3a3"></path></svg>
<div class="a" style="left:595.4px;top:256.5px;width:72.2px;height:11.7px;background:#1b1b1b;border:1px solid #262626;border-radius:2px"></div>
<svg style="left:661px;top:260.8px;" width="5" height="3" viewBox="0 0 5 3"><path d="M0.3 0.3 L2.5 2.5 L4.7 0.3" stroke="#a3a3a3" stroke-width="0.9" fill="none"></path></svg>
<svg style="left:543.5px;top:277.5px;" width="12" height="10" viewBox="0 0 12 10"><path d="M1 0.5 V9.5 M0 1.8 L1 0.5 L2 1.8 M0 8.2 L1 9.5 L2 8.2" stroke="#c6c6c6" stroke-width="0.8" fill="none"></path><path d="M3 2.5 V0.8 H11.5 V2.5 M7.25 0.8 V9.2 M5.3 9.2 H9.2" stroke="#c6c6c6" stroke-width="1.5" fill="none"></path></svg>
<div class="t" style="color: rgb(63, 128, 200); font-size: 7.6px; left: 558.794px; top: 277.767px; transform: scaleX(0.951698);">100</div>
<div class="t" style="color: rgb(110, 110, 110); font-size: 7.6px; left: 571.79px; top: 277.767px; transform: scaleX(0.919467);">%</div>
<div class="t" style="color: rgb(63, 128, 200); font-size: 7.6px; left: 630.916px; top: 278.567px; transform: scaleX(0.909587);">100</div>
<div class="t" style="color: rgb(110, 110, 110); font-size: 7.6px; left: 644.094px; top: 278.567px; transform: scaleX(0.903614);">%</div>
<svg style="left:611.5px;top:278.5px;" width="11" height="11" viewBox="0 0 11 11"><path d="M1 2.3 V0.8 H9.5 V2.3 M5.25 0.8 V7 M3.5 7 H7" stroke="#c6c6c6" stroke-width="1.5" fill="none"></path><path d="M0.5 9.5 H10 M0.5 9.5 L2 8.3 M0.5 9.5 L2 10.7 M10 9.5 L8.5 8.3 M10 9.5 L8.5 10.7" stroke="#c6c6c6" stroke-width="0.8" fill="none"></path></svg>
<svg style="left:588px;top:281.3px;" width="3.9" height="2.8" viewBox="0 0 3.9 2.8"><path d="M0 0 H3.9 L1.95 2.8 Z" fill="#a3a3a3"></path></svg>
<svg style="left:660.8px;top:281.3px;" width="4.6" height="3.2" viewBox="0 0 4.6 3.2"><path d="M0 0 H4.6 L2.3 3.2 Z" fill="#a3a3a3"></path></svg>
<svg style="left:543px;top:292.5px;" width="11" height="9.5" viewBox="0 0 11 9.5"><path d="M0.5 8.5 L3.5 0.8 L6.5 8.5 M1.6 5.8 H5.4 M0 8.8 H7" stroke="#c6c6c6" stroke-width="1.1" fill="none"></path><path d="M8.5 1.5 H10.5 M9.5 0.5 V2.5 M8 4.2 H11 M8.3 6 L9.5 8.5 L10.7 6 Z" stroke="#c6c6c6" stroke-width="0.7" fill="#c6c6c6"></path></svg>
<div class="t" style="color: rgb(63, 128, 200); font-size: 7.6px; left: 559.122px; top: 292.067px; transform: scaleX(0.778733);">0</div>
<div class="t" style="color: rgb(110, 110, 110); font-size: 7.6px; left: 564.362px; top: 292.067px; transform: scaleX(0.960671);">px</div>
<svg style="left:612px;top:292px;" width="10.5" height="9.5" viewBox="0 0 10.5 9.5"><path d="M0.5 0 V7 M10 0 V7" stroke="#c6c6c6" stroke-width="0.7"></path><path d="M1 8.8 H3.5 M1 8.8 L2 8 M1 8.8 L2 9.6 M9.5 8.8 H7 M9.5 8.8 L8.5 8 M9.5 8.8 L8.5 9.6" stroke="#c6c6c6" stroke-width="0.7" fill="none"></path></svg>
<div class="t" style="color: rgb(198, 198, 198); font-size: 7.4px; left: 612.763px; top: 292.536px; transform: scaleX(1.18049);">あ</div>
<div class="t" style="color: rgb(63, 128, 200); font-size: 7.6px; left: 630.649px; top: 292.067px; transform: scaleX(1.10097);">0</div>
<div class="t" style="color: rgb(110, 110, 110); font-size: 7.6px; left: 636.794px; top: 292.067px; transform: scaleX(0.903614);">%</div>
<svg style="left:588px;top:295px;" width="3.9" height="2.8" viewBox="0 0 3.9 2.8"><path d="M0 0 H3.9 L1.95 2.8 Z" fill="#a3a3a3"></path></svg>
<svg style="left:660.8px;top:293.2px;" width="4.6" height="3.2" viewBox="0 0 4.6 3.2"><path d="M0 0 H4.6 L2.3 3.2 Z" fill="#a3a3a3"></path></svg>
<div class="a" style="left:0px;top:308px;width:680px;height:114px;background:#232323;"></div>
<div class="a" style="left:0px;top:49px;width:1.5px;height:373px;background:#1a1a1a;background:linear-gradient(#191919 0px,#1a1f27 150px,#1b2b3d 250px,#1d3552 300px,#1d3552 373px)"></div>
<div class="a" style="left:0px;top:421px;width:680px;height:1px;background:#1a1a1a;"></div>
<div class="t" style="color: rgb(138, 138, 138); font-size: 8px; left: 7.84348px; top: 312.228px; transform: scaleX(0.951087);">×</div>
<div class="a" style="left:18px;top:313px;width:7px;height:6.2px;background:#c9b48a;"></div>
<div class="t" style="color: rgb(163, 163, 163); font-size: 9px; left: 31.063px; top: 311.682px; transform: scaleX(0.6941);">コンポ 1</div>
<svg style="left:62px;top:313.5px;" width="5.5" height="6" viewBox="0 0 5.5 6"><path d="M0 0.6 H5.3 M0 3 H5.3 M0 5.4 H5.3" stroke="#a3a3a3" stroke-width="1"></path></svg>
<div class="t" style="color: rgb(59, 142, 224); font-weight: bold; font-size: 9.6px; left: 14.5016px; top: 327.974px; transform: scaleX(1.03607);">0:00:02:16</div>
<div class="t" style="color: rgb(41, 88, 132); font-size: 7.8px; left: 9.282px; top: 338.397px; transform: scaleX(0.931614);">00064 (23.976 fps)</div>
<div class="a" style="left:78px;top:331px;width:137px;height:10.8px;background:#1a1a1a;border-radius:2px"></div>
<svg style="left:81.8px;top:333px;" width="11" height="8" viewBox="0 0 11 8"><circle cx="5.5" cy="3" r="2.5" fill="none" stroke="#c6c6c6" stroke-width="1.1"></circle><path d="M3.8 4.8 L0.8 7.5" stroke="#c6c6c6" stroke-width="1.4"></path><path d="M7.8 5 H10.8 L9.3 6.5 Z" fill="#c6c6c6"></path></svg>
<svg style="left:224.7px;top:332.5px;" width="11.5" height="8.5" viewBox="0 0 11.5 8.5"><rect x="0" y="0.8" width="4" height="1.6" fill="#a8a8a8"></rect><path d="M4 1.6 H7 V6.5 H8.5 M7 3.8 H8.5" stroke="#a8a8a8" stroke-width="0.9" fill="none"></path><rect x="8.3" y="5.5" width="2.5" height="2.5" fill="#a8a8a8"></rect><rect x="8.3" y="2.8" width="2.5" height="2" fill="#a8a8a8"></rect></svg>
<svg style="left:246px;top:331px;" width="12" height="11" viewBox="0 0 12 11"><circle cx="2.5" cy="2.5" r="2" fill="#c8c8c8"></circle><path d="M7.5 3.5 L11.5 5.5 V9.5 L7.5 11 L3.5 9.5 V5.5 Z M3.5 5.5 L7.5 7.3 L11.5 5.5 M7.5 7.3 V11" fill="none" stroke="#a8a8a8" stroke-width="0.9"></path></svg>
<svg style="left:269px;top:333px;" width="10.5" height="8" viewBox="0 0 10.5 8"><path d="M5.2 0 Q9 0 10 4 H0.5 Q1.5 0 5.2 0 Z" fill="#a8a8a8"></path><rect x="0.5" y="4.5" width="9.5" height="3.5" fill="#a8a8a8"></rect><path d="M3.5 1 V8 M7 1 V8" stroke="#232323" stroke-width="0.6"></path></svg>
<svg style="left:286px;top:332px;" width="10.5" height="10" viewBox="0 0 10.5 10"><rect x="3" y="0.3" width="7.2" height="7.2" fill="#a8a8a8"></rect><rect x="0.3" y="2.8" width="7.2" height="7.2" fill="#9a9a9a" stroke="#232323" stroke-width="0.6"></rect><rect x="5" y="2.5" width="3" height="0.8" fill="#232323"></rect></svg>
<svg style="left:302.8px;top:332.5px;" width="10.5" height="9.5" viewBox="0 0 10.5 9.5"><rect x="-0.5" y="2.2" width="11.5" height="5.2" rx="2.6" fill="none" stroke="#a8a8a8" stroke-width="1.3" transform="rotate(-40 5.25 4.75)"></rect><rect x="1.5" y="3.4" width="5" height="2.8" rx="1.4" fill="#a8a8a8" transform="rotate(-40 5.25 4.75)"></rect></svg>
<svg style="left:324px;top:331px;" width="11.5" height="11.5" viewBox="0 0 11.5 11.5"><rect x="0.7" y="1.5" width="10" height="9.3" fill="none" stroke="#a8a8a8" stroke-width="1"></rect><path d="M2.5 0 V3 M8.8 0 V3" stroke="#a8a8a8" stroke-width="1"></path><path d="M2.5 4.5 Q5 4.5 6 6.5 Q7 8.5 9 8.8" stroke="#a8a8a8" stroke-width="0.9" fill="none"></path></svg>
<div class="a" style="left:346.5px;top:329px;width:321px;height:5.5px;background:#6e6e6e;"></div>
<svg style="left:346px;top:329px;" width="4.5" height="5.5" viewBox="0 0 4.5 5.5"><path d="M4.5 0 V5.5 H2.5 A2.5 2.75 0 0 1 2.5 0 Z" fill="#2d8ceb"></path></svg>
<svg style="left:663.5px;top:329px;" width="4.5" height="5.5" viewBox="0 0 4.5 5.5"><path d="M0 0 V5.5 H2 A2.5 2.75 0 0 0 2 0 Z" fill="#2d8ceb"></path></svg>
<div class="a" style="left:433px;top:329px;width:1.2px;height:5.5px;background:#7aa8d8;"></div>
<div class="t" style="color: rgb(184, 184, 184); font-size: 7.4px; left: 341.269px; top: 336.336px; transform: scaleX(1.04199);">0:00s</div>
<div class="t" style="color: rgb(184, 184, 184); font-size: 7.4px; left: 406.787px; top: 336.336px; transform: scaleX(0.9576);">02s</div>
<div class="t" style="color: rgb(184, 184, 184); font-size: 7.4px; left: 469.787px; top: 336.336px; transform: scaleX(0.9576);">04s</div>
<div class="t" style="color: rgb(184, 184, 184); font-size: 7.4px; left: 532.287px; top: 336.336px; transform: scaleX(0.9576);">06s</div>
<div class="t" style="color: rgb(184, 184, 184); font-size: 7.4px; left: 594.487px; top: 336.336px; transform: scaleX(0.9576);">08s</div>
<div class="t" style="color: rgb(184, 184, 184); font-size: 7.4px; left: 657.142px; top: 336.336px; transform: scaleX(0.884635);">10s</div>
<div class="a" style="left:336px;top:335px;width:9.5px;height:12px;background:#232323;"></div>
<div class="a" style="left:350px;top:342px;width:1px;height:6px;background:#b8b8b8;"></div>
<div class="a" style="left:413px;top:344.5px;width:1px;height:2.5px;background:#8a8a8a;"></div>
<div class="a" style="left:475.5px;top:344.5px;width:1px;height:2.5px;background:#8a8a8a;"></div>
<div class="a" style="left:538px;top:344.5px;width:1px;height:2.5px;background:#8a8a8a;"></div>
<div class="a" style="left:600px;top:344.5px;width:1px;height:2.5px;background:#8a8a8a;"></div>
<div class="a" style="left:663px;top:344.5px;width:1px;height:2.5px;background:#8a8a8a;"></div>
<div class="a" style="left:345px;top:347.2px;width:335px;height:1px;background:#161616;"></div>
<div class="a" style="left:2px;top:348.5px;width:343px;height:11.5px;background:#2b2b2b;"></div>
<svg style="left:5px;top:351.5px;" width="9" height="5.5" viewBox="0 0 9 5.5"><path d="M0.3 2.75 Q4.5 -1.5 8.7 2.75 Q4.5 7 0.3 2.75 Z" fill="#c6c6c6"></path><circle cx="4.5" cy="2.75" r="1.3" fill="#2b2b2b"></circle></svg>
<svg style="left:15px;top:350.5px;" width="8" height="8" viewBox="0 0 8 8"><path d="M0.5 2.5 H2 L4.5 0.3 V7.7 L2 5.5 H0.5 Z" fill="#c6c6c6"></path><path d="M5.8 2 Q7 4 5.8 6" stroke="#c6c6c6" stroke-width="0.8" fill="none"></path></svg>
<svg style="left:26px;top:352.3px;" width="5" height="5" viewBox="0 0 5 5"><circle cx="2.5" cy="2.5" r="2.1" fill="#c6c6c6"></circle></svg>
<svg style="left:34px;top:350.5px;" width="7" height="8" viewBox="0 0 7 8"><path d="M1.5 3.5 V2.2 A2 2 0 0 1 5.5 2.2 V3.5" fill="none" stroke="#c6c6c6" stroke-width="1.1"></path><rect x="0.5" y="3.5" width="6" height="4.3" fill="#c6c6c6"></rect><rect x="3" y="4.6" width="1" height="2" fill="#2b2b2b"></rect></svg>
<div class="a" style="left:45px;top:351px;width:1px;height:7px;background:#1a1a1a;"></div>
<div class="a" style="left:67px;top:351px;width:1px;height:7px;background:#1a1a1a;"></div>
<div class="a" style="left:87.4px;top:351px;width:1px;height:7px;background:#1a1a1a;"></div>
<div class="a" style="left:171.5px;top:351px;width:1px;height:7px;background:#1a1a1a;"></div>
<div class="a" style="left:258px;top:351px;width:1px;height:7px;background:#1a1a1a;"></div>
<div class="a" style="left:260.9px;top:351px;width:1px;height:7px;background:#1a1a1a;"></div>
<div class="a" style="left:335px;top:351px;width:1px;height:7px;background:#1a1a1a;"></div>
<svg style="left:54px;top:350.5px;" width="9" height="9" viewBox="0 0 9 9"><path d="M0.5 0.5 H4.5 L8.5 4.5 L4.5 8.5 L0.5 4.5 Z" fill="#c6c6c6"></path><circle cx="2.5" cy="2.5" r="0.9" fill="#2b2b2b"></circle></svg>
<div class="t" style="color: rgb(85, 85, 85); font-size: 7px; left: 70.7px; top: 351.075px; transform: scaleX(0.714286);">#</div>
<div class="t" style="color: rgb(163, 163, 163); font-size: 9.2px; left: 91.0029px; top: 350.212px; transform: scaleX(0.774114);">レイヤー名</div>
<svg style="left:174.5px;top:351px;" width="8" height="7.5" viewBox="0 0 8 7.5"><path d="M4 0.3 Q7.3 0.3 7.3 4 H0.7 Q0.7 0.3 4 0.3 Z" fill="#c0c0c0"></path><circle cx="2.8" cy="2.3" r="0.6" fill="#2b2b2b"></circle><circle cx="5.2" cy="2.3" r="0.6" fill="#2b2b2b"></circle><path d="M0 4.6 H8" stroke="#c0c0c0" stroke-width="0.9"></path><path d="M2 4.6 L1.2 7 M4 4.6 V7 M6 4.6 L6.8 7" stroke="#c0c0c0" stroke-width="0.8"></path></svg>
<svg style="left:184.5px;top:351px;" width="7" height="7" viewBox="0 0 7 7"><circle cx="3.5" cy="3.5" r="1.9" fill="none" stroke="#c0c0c0" stroke-width="1"></circle><path d="M3.5 0 V1.3 M3.5 5.7 V7 M0 3.5 H1.3 M5.7 3.5 H7" stroke="#c0c0c0" stroke-width="1"></path></svg>
<svg style="left:193.8px;top:351px;" width="7.5" height="7.5" viewBox="0 0 7.5 7.5"><path d="M0.5 0.5 L7 7" stroke="#c6c6c6" stroke-width="1.1"></path></svg>
<div class="t" style="color: rgb(198, 198, 198); font-style: italic; font-size: 8.5px; left: 203.912px; top: 351.105px; transform: scaleX(1.04012);" liberation="" serif",serif"="">fx</div>
<svg style="left:213px;top:351px;" width="8" height="7.5" viewBox="0 0 8 7.5"><rect x="0.3" y="0.3" width="7.4" height="7" fill="#9a9a9a" stroke="#c6c6c6" stroke-width="0.6"></rect><rect x="2" y="3" width="4" height="1.3" fill="#eee"></rect></svg>
<svg style="left:222.5px;top:350.5px;" width="8.5" height="8.5" viewBox="0 0 8.5 8.5"><rect x="-0.7" y="2" width="9.9" height="4.5" rx="2.25" fill="none" stroke="#b0b0b0" stroke-width="1.1" transform="rotate(-40 4.25 4.25)"></rect><rect x="1.2" y="3.1" width="4" height="2.3" rx="1.1" fill="#9a9a9a" transform="rotate(-40 4.25 4.25)"></rect></svg>
<svg style="left:232.8px;top:351px;" width="7.5" height="7.5" viewBox="0 0 7.5 7.5"><circle cx="3.75" cy="3.75" r="3.4" fill="#c6c6c6"></circle><path d="M6.2 1.3 A3.4 3.4 0 0 1 1.3 6.2 Z" fill="#2b2b2b"></path></svg>
<svg style="left:241.6px;top:350.5px;" width="9" height="8.5" viewBox="0 0 9 8.5"><path d="M4.5 0.5 L8.5 2.5 V6.5 L4.5 8.2 L0.5 6.5 V2.5 Z M0.5 2.5 L4.5 4.3 L8.5 2.5 M4.5 4.3 V8.2" fill="none" stroke="#c6c6c6" stroke-width="0.9"></path></svg>
<div class="t" style="color: rgb(163, 163, 163); font-size: 9.2px; left: 263.735px; top: 350.212px; transform: scaleX(0.70241);">親とリンク</div>
<div class="a" style="left:2px;top:361px;width:343px;height:11.3px;background:#3d3d3d;"></div>
<div class="a" style="left:4.3px;top:361.7px;width:8.5px;height:9.9px;background:#2c2c2c;"></div>
<svg style="left:5.5px;top:364.3px;" width="7.5" height="5" viewBox="0 0 7.5 5"><path d="M0.2 2.5 Q3.75 -1.2 7.3 2.5 Q3.75 6.2 0.2 2.5 Z" fill="#e0e0e0"></path><circle cx="3.75" cy="2.5" r="1.15" fill="#2a2a2a"></circle></svg>
<div class="a" style="left:23.8px;top:361.5px;width:8.7px;height:10.3px;background:#262626;"></div>
<div class="a" style="left:34px;top:361.5px;width:8.5px;height:10.3px;background:#262626;"></div>
<svg style="left:49.2px;top:364.5px;" width="4" height="5.5" viewBox="0 0 4 5.5"><path d="M0.5 0.3 L3.3 2.75 L0.5 5.2" stroke="#9a9a9a" stroke-width="0.9" fill="none"></path></svg>
<div class="a" style="left:56.3px;top:362.1px;width:10px;height:8.8px;background:#c83a3a;"></div>
<div class="t" style="color: rgb(184, 184, 184); font-size: 7.4px; left: 71.1659px; top: 362.736px; transform: scaleX(0.644963);">1</div>
<div class="t" style="color: rgb(216, 216, 216); font-size: 8.5px; left: 91.1035px; top: 362.005px; transform: scaleX(1.15583);" liberation="" serif",serif;font-weight:bold"="">T</div>
<div class="a" style="left:100.9px;top:361.3px;width:70.1px;height:11px;background:#3a3a3a;border:1px solid #9c9c9c"></div>
<div class="t" style="color: rgb(205, 205, 205); font-size: 8.8px; left: 102.607px; top: 362.351px; transform: scaleX(0.744593);">テストです</div>
<div class="t" style="color: rgb(205, 205, 205); font-size: 7.4px; left: 139.254px; top: 364.036px; transform: scaleX(1.20446);">2</div>
<div class="a" style="left:174px;top:361.5px;width:8.7px;height:10.3px;background:#292929;"></div>
<div class="a" style="left:184.3px;top:361.5px;width:7.9px;height:10.3px;background:#292929;"></div>
<div class="a" style="left:193.8px;top:361.5px;width:7.9px;height:10.3px;background:#292929;"></div>
<svg style="left:174.8px;top:363.2px;" width="8" height="7.5" viewBox="0 0 8 7.5"><path d="M4 0.3 Q7.3 0.3 7.3 4 H0.7 Q0.7 0.3 4 0.3 Z" fill="#d0d0d0"></path><circle cx="2.8" cy="2.3" r="0.6" fill="#2b2b2b"></circle><circle cx="5.2" cy="2.3" r="0.6" fill="#2b2b2b"></circle><path d="M0 4.6 H8" stroke="#d0d0d0" stroke-width="0.9"></path><path d="M2 4.6 L1.2 7 M4 4.6 V7 M6 4.6 L6.8 7" stroke="#d0d0d0" stroke-width="0.8"></path></svg>
<svg style="left:184.8px;top:363.3px;" width="7" height="7" viewBox="0 0 7 7"><circle cx="3.5" cy="3.5" r="1.9" fill="none" stroke="#8a8a8a" stroke-width="0.8"></circle><path d="M3.5 0 V1.3 M3.5 5.7 V7 M0 3.5 H1.3 M5.7 3.5 H7" stroke="#8a8a8a" stroke-width="0.8"></path></svg>
<svg style="left:194.5px;top:362.5px;" width="6.5" height="8" viewBox="0 0 6.5 8"><path d="M0.5 7.5 L6 0.5" stroke="#d8d8d8" stroke-width="1"></path></svg>
<div class="a" style="left:222.4px;top:361.5px;width:8.4px;height:10.3px;background:#262626;"></div>
<div class="a" style="left:231.9px;top:361.5px;width:8.4px;height:10.3px;background:#262626;"></div>
<div class="a" style="left:242.2px;top:361.5px;width:8.4px;height:10.3px;background:#262626;"></div>
<svg style="left:262.6px;top:363.7px;" width="8.3" height="6.3" viewBox="0 0 8.3 6.3"><path d="M4.2 3.2 A1 1 0 1 1 5.2 2.5 A2 2 0 1 1 2.5 4.7 A3 3 0 1 1 7.5 2" fill="none" stroke="#a8a8a8" stroke-width="0.9"></path></svg>
<div class="a" style="left:274.8px;top:361.4px;width:57.2px;height:10.5px;background:#1e1e1e;"></div>
<div class="t" style="color: rgb(210, 210, 210); font-size: 9.6px; left: 278.49px; top: 362.074px; transform: scaleX(0.808288);">なし</div>
<svg style="left:324px;top:365px;" width="5.5" height="3.3" viewBox="0 0 5.5 3.3"><path d="M0.4 0.4 L2.75 2.8 L5.1 0.4" stroke="#a3a3a3" stroke-width="0.9" fill="none"></path></svg>
<div class="a" style="left:332.8px;top:361px;width:12.2px;height:11.3px;background:#494949;"></div>
<div class="a" style="left:346px;top:361px;width:318.5px;height:11.3px;background:#464646;"></div>
<div class="a" style="left:664.5px;top:361px;width:4px;height:11.3px;background:#2a2a2a;"></div>
<div class="a" style="left:2px;top:373.2px;width:343px;height:11.3px;background:#2f2f2f;"></div>
<div class="a" style="left:4.3px;top:373.9px;width:8.5px;height:9.9px;background:#262626;"></div>
<svg style="left:5.5px;top:376.5px;" width="7.5" height="5" viewBox="0 0 7.5 5"><path d="M0.2 2.5 Q3.75 -1.2 7.3 2.5 Q3.75 6.2 0.2 2.5 Z" fill="#e0e0e0"></path><circle cx="3.75" cy="2.5" r="1.15" fill="#2a2a2a"></circle></svg>
<div class="a" style="left:23.8px;top:373.7px;width:8.7px;height:10.3px;background:#262626;"></div>
<div class="a" style="left:34px;top:373.7px;width:8.5px;height:10.3px;background:#262626;"></div>
<svg style="left:49.2px;top:376.7px;" width="4" height="5.5" viewBox="0 0 4 5.5"><path d="M0.5 0.3 L3.3 2.75 L0.5 5.2" stroke="#9a9a9a" stroke-width="0.9" fill="none"></path></svg>
<div class="a" style="left:56.3px;top:374.3px;width:10px;height:8.8px;background:#6b8ae6;"></div>
<div class="t" style="color: rgb(184, 184, 184); font-size: 7.4px; left: 71.2717px; top: 374.936px; transform: scaleX(0.616921);">2</div>
<svg style="left:91px;top:375.2px;" width="6.6" height="6.4" viewBox="0 0 6.6 6.4"><path d="M3.3 0 L4.1 2.3 L6.6 2.4 L4.6 3.9 L5.3 6.3 L3.3 4.9 L1.3 6.3 L2 3.9 L0 2.4 L2.5 2.3 Z" fill="#e0e0e0"></path></svg>
<div class="t" style="color: rgb(205, 205, 205); font-size: 8.8px; left: 102.304px; top: 374.551px; transform: scaleX(0.790886);">シェイプレイヤー</div>
<div class="t" style="color: rgb(205, 205, 205); font-size: 7.4px; left: 160.609px; top: 376.236px; transform: scaleX(1.05758);">2</div>
<div class="a" style="left:174px;top:373.7px;width:8.7px;height:10.3px;background:#292929;"></div>
<div class="a" style="left:184.3px;top:373.7px;width:7.9px;height:10.3px;background:#292929;"></div>
<div class="a" style="left:193.8px;top:373.7px;width:7.9px;height:10.3px;background:#292929;"></div>
<svg style="left:174.8px;top:375.4px;" width="8" height="7.5" viewBox="0 0 8 7.5"><path d="M4 0.3 Q7.3 0.3 7.3 4 H0.7 Q0.7 0.3 4 0.3 Z" fill="#d0d0d0"></path><circle cx="2.8" cy="2.3" r="0.6" fill="#2b2b2b"></circle><circle cx="5.2" cy="2.3" r="0.6" fill="#2b2b2b"></circle><path d="M0 4.6 H8" stroke="#d0d0d0" stroke-width="0.9"></path><path d="M2 4.6 L1.2 7 M4 4.6 V7 M6 4.6 L6.8 7" stroke="#d0d0d0" stroke-width="0.8"></path></svg>
<svg style="left:184.8px;top:375.5px;" width="7" height="7" viewBox="0 0 7 7"><circle cx="3.5" cy="3.5" r="1.9" fill="none" stroke="#8a8a8a" stroke-width="0.8"></circle><path d="M3.5 0 V1.3 M3.5 5.7 V7 M0 3.5 H1.3 M5.7 3.5 H7" stroke="#8a8a8a" stroke-width="0.8"></path></svg>
<svg style="left:194.5px;top:374.7px;" width="6.5" height="8" viewBox="0 0 6.5 8"><path d="M0.5 7.5 L6 0.5" stroke="#d8d8d8" stroke-width="1"></path></svg>
<div class="a" style="left:222.4px;top:373.7px;width:8.4px;height:10.3px;background:#262626;"></div>
<div class="a" style="left:231.9px;top:373.7px;width:8.4px;height:10.3px;background:#262626;"></div>
<div class="a" style="left:242.2px;top:373.7px;width:8.4px;height:10.3px;background:#262626;"></div>
<svg style="left:262.6px;top:375.9px;" width="8.3" height="6.3" viewBox="0 0 8.3 6.3"><path d="M4.2 3.2 A1 1 0 1 1 5.2 2.5 A2 2 0 1 1 2.5 4.7 A3 3 0 1 1 7.5 2" fill="none" stroke="#a8a8a8" stroke-width="0.9"></path></svg>
<div class="a" style="left:274.8px;top:373.59999999999997px;width:57.2px;height:10.5px;background:#1e1e1e;"></div>
<div class="t" style="color: rgb(210, 210, 210); font-size: 9.6px; left: 278.49px; top: 374.274px; transform: scaleX(0.808288);">なし</div>
<svg style="left:324px;top:377.2px;" width="5.5" height="3.3" viewBox="0 0 5.5 3.3"><path d="M0.4 0.4 L2.75 2.8 L5.1 0.4" stroke="#a3a3a3" stroke-width="0.9" fill="none"></path></svg>
<div class="a" style="left:332.8px;top:373.2px;width:12.2px;height:11.3px;background:#343434;"></div>
<div class="a" style="left:346px;top:373.2px;width:318.5px;height:11.3px;background:#363636;"></div>
<div class="a" style="left:664.5px;top:373.2px;width:4px;height:11.3px;background:#2a2a2a;"></div>
<div class="a" style="left:2px;top:385.2px;width:343px;height:11.3px;background:#2f2f2f;"></div>
<div class="a" style="left:4.3px;top:385.9px;width:8.5px;height:9.9px;background:#262626;"></div>
<svg style="left:5.5px;top:388.5px;" width="7.5" height="5" viewBox="0 0 7.5 5"><path d="M0.2 2.5 Q3.75 -1.2 7.3 2.5 Q3.75 6.2 0.2 2.5 Z" fill="#e0e0e0"></path><circle cx="3.75" cy="2.5" r="1.15" fill="#2a2a2a"></circle></svg>
<div class="a" style="left:23.8px;top:385.7px;width:8.7px;height:10.3px;background:#262626;"></div>
<div class="a" style="left:34px;top:385.7px;width:8.5px;height:10.3px;background:#262626;"></div>
<svg style="left:49.2px;top:388.7px;" width="4" height="5.5" viewBox="0 0 4 5.5"><path d="M0.5 0.3 L3.3 2.75 L0.5 5.2" stroke="#9a9a9a" stroke-width="0.9" fill="none"></path></svg>
<div class="a" style="left:56.3px;top:386.3px;width:10px;height:8.8px;background:#c83a3a;"></div>
<div class="t" style="color: rgb(184, 184, 184); font-size: 7.4px; left: 71.3714px; top: 386.936px; transform: scaleX(0.579151);">3</div>
<div class="t" style="color: rgb(216, 216, 216); font-size: 8.5px; left: 91.1035px; top: 386.205px; transform: scaleX(1.15583);" liberation="" serif",serif;font-weight:bold"="">T</div>
<div class="t" style="color: rgb(205, 205, 205); font-size: 8.8px; left: 102.607px; top: 386.551px; transform: scaleX(0.744593);">テストです</div>
<div class="a" style="left:174px;top:385.7px;width:8.7px;height:10.3px;background:#292929;"></div>
<div class="a" style="left:184.3px;top:385.7px;width:7.9px;height:10.3px;background:#292929;"></div>
<div class="a" style="left:193.8px;top:385.7px;width:7.9px;height:10.3px;background:#292929;"></div>
<svg style="left:174.8px;top:387.4px;" width="8" height="7.5" viewBox="0 0 8 7.5"><path d="M4 0.3 Q7.3 0.3 7.3 4 H0.7 Q0.7 0.3 4 0.3 Z" fill="#d0d0d0"></path><circle cx="2.8" cy="2.3" r="0.6" fill="#2b2b2b"></circle><circle cx="5.2" cy="2.3" r="0.6" fill="#2b2b2b"></circle><path d="M0 4.6 H8" stroke="#d0d0d0" stroke-width="0.9"></path><path d="M2 4.6 L1.2 7 M4 4.6 V7 M6 4.6 L6.8 7" stroke="#d0d0d0" stroke-width="0.8"></path></svg>
<svg style="left:184.8px;top:387.5px;" width="7" height="7" viewBox="0 0 7 7"><circle cx="3.5" cy="3.5" r="1.9" fill="none" stroke="#8a8a8a" stroke-width="0.8"></circle><path d="M3.5 0 V1.3 M3.5 5.7 V7 M0 3.5 H1.3 M5.7 3.5 H7" stroke="#8a8a8a" stroke-width="0.8"></path></svg>
<svg style="left:194.5px;top:386.7px;" width="6.5" height="8" viewBox="0 0 6.5 8"><path d="M0.5 7.5 L6 0.5" stroke="#d8d8d8" stroke-width="1"></path></svg>
<div class="a" style="left:222.4px;top:385.7px;width:8.4px;height:10.3px;background:#262626;"></div>
<div class="a" style="left:231.9px;top:385.7px;width:8.4px;height:10.3px;background:#262626;"></div>
<div class="a" style="left:242.2px;top:385.7px;width:8.4px;height:10.3px;background:#262626;"></div>
<svg style="left:262.6px;top:387.9px;" width="8.3" height="6.3" viewBox="0 0 8.3 6.3"><path d="M4.2 3.2 A1 1 0 1 1 5.2 2.5 A2 2 0 1 1 2.5 4.7 A3 3 0 1 1 7.5 2" fill="none" stroke="#a8a8a8" stroke-width="0.9"></path></svg>
<div class="a" style="left:274.8px;top:385.59999999999997px;width:57.2px;height:10.5px;background:#1e1e1e;"></div>
<div class="t" style="color: rgb(210, 210, 210); font-size: 9.6px; left: 278.49px; top: 386.274px; transform: scaleX(0.808288);">なし</div>
<svg style="left:324px;top:389.2px;" width="5.5" height="3.3" viewBox="0 0 5.5 3.3"><path d="M0.4 0.4 L2.75 2.8 L5.1 0.4" stroke="#a3a3a3" stroke-width="0.9" fill="none"></path></svg>
<div class="a" style="left:332.8px;top:385.2px;width:12.2px;height:11.3px;background:#343434;"></div>
<div class="a" style="left:346px;top:385.2px;width:318.5px;height:11.3px;background:#363636;"></div>
<div class="a" style="left:664.5px;top:385.2px;width:4px;height:11.3px;background:#2a2a2a;"></div>
<div class="a" style="left:2px;top:397.3px;width:343px;height:11.3px;background:#2f2f2f;"></div>
<div class="a" style="left:4.3px;top:398.0px;width:8.5px;height:9.9px;background:#262626;"></div>
<svg style="left:5.5px;top:400.6px;" width="7.5" height="5" viewBox="0 0 7.5 5"><path d="M0.2 2.5 Q3.75 -1.2 7.3 2.5 Q3.75 6.2 0.2 2.5 Z" fill="#e0e0e0"></path><circle cx="3.75" cy="2.5" r="1.15" fill="#2a2a2a"></circle></svg>
<div class="a" style="left:23.8px;top:397.8px;width:8.7px;height:10.3px;background:#262626;"></div>
<div class="a" style="left:34px;top:397.8px;width:8.5px;height:10.3px;background:#262626;"></div>
<svg style="left:49.2px;top:400.8px;" width="4" height="5.5" viewBox="0 0 4 5.5"><path d="M0.5 0.3 L3.3 2.75 L0.5 5.2" stroke="#9a9a9a" stroke-width="0.9" fill="none"></path></svg>
<div class="a" style="left:56.3px;top:398.40000000000003px;width:10px;height:8.8px;background:#6b8ae6;"></div>
<div class="t" style="color: rgb(184, 184, 184); font-size: 7.4px; left: 71.4176px; top: 399.036px; transform: scaleX(0.556439);">4</div>
<svg style="left:91px;top:399.3px;" width="6.6" height="6.4" viewBox="0 0 6.6 6.4"><path d="M3.3 0 L4.1 2.3 L6.6 2.4 L4.6 3.9 L5.3 6.3 L3.3 4.9 L1.3 6.3 L2 3.9 L0 2.4 L2.5 2.3 Z" fill="#e0e0e0"></path></svg>
<div class="t" style="color: rgb(205, 205, 205); font-size: 8.8px; left: 102.309px; top: 398.651px; transform: scaleX(0.785176);">シェイプレイヤー</div>
<div class="t" style="color: rgb(205, 205, 205); font-size: 7.4px; left: 161.166px; top: 400.336px; transform: scaleX(0.644963);">1</div>
<div class="a" style="left:174px;top:397.8px;width:8.7px;height:10.3px;background:#292929;"></div>
<div class="a" style="left:184.3px;top:397.8px;width:7.9px;height:10.3px;background:#292929;"></div>
<div class="a" style="left:193.8px;top:397.8px;width:7.9px;height:10.3px;background:#292929;"></div>
<svg style="left:174.8px;top:399.5px;" width="8" height="7.5" viewBox="0 0 8 7.5"><path d="M4 0.3 Q7.3 0.3 7.3 4 H0.7 Q0.7 0.3 4 0.3 Z" fill="#d0d0d0"></path><circle cx="2.8" cy="2.3" r="0.6" fill="#2b2b2b"></circle><circle cx="5.2" cy="2.3" r="0.6" fill="#2b2b2b"></circle><path d="M0 4.6 H8" stroke="#d0d0d0" stroke-width="0.9"></path><path d="M2 4.6 L1.2 7 M4 4.6 V7 M6 4.6 L6.8 7" stroke="#d0d0d0" stroke-width="0.8"></path></svg>
<svg style="left:184.8px;top:399.6px;" width="7" height="7" viewBox="0 0 7 7"><circle cx="3.5" cy="3.5" r="1.9" fill="none" stroke="#8a8a8a" stroke-width="0.8"></circle><path d="M3.5 0 V1.3 M3.5 5.7 V7 M0 3.5 H1.3 M5.7 3.5 H7" stroke="#8a8a8a" stroke-width="0.8"></path></svg>
<svg style="left:194.5px;top:398.8px;" width="6.5" height="8" viewBox="0 0 6.5 8"><path d="M0.5 7.5 L6 0.5" stroke="#d8d8d8" stroke-width="1"></path></svg>
<div class="a" style="left:222.4px;top:397.8px;width:8.4px;height:10.3px;background:#262626;"></div>
<div class="a" style="left:231.9px;top:397.8px;width:8.4px;height:10.3px;background:#262626;"></div>
<div class="a" style="left:242.2px;top:397.8px;width:8.4px;height:10.3px;background:#262626;"></div>
<svg style="left:262.6px;top:400.0px;" width="8.3" height="6.3" viewBox="0 0 8.3 6.3"><path d="M4.2 3.2 A1 1 0 1 1 5.2 2.5 A2 2 0 1 1 2.5 4.7 A3 3 0 1 1 7.5 2" fill="none" stroke="#a8a8a8" stroke-width="0.9"></path></svg>
<div class="a" style="left:274.8px;top:397.7px;width:57.2px;height:10.5px;background:#1e1e1e;"></div>
<div class="t" style="color: rgb(210, 210, 210); font-size: 9.6px; left: 278.49px; top: 398.374px; transform: scaleX(0.808288);">なし</div>
<svg style="left:324px;top:401.3px;" width="5.5" height="3.3" viewBox="0 0 5.5 3.3"><path d="M0.4 0.4 L2.75 2.8 L5.1 0.4" stroke="#a3a3a3" stroke-width="0.9" fill="none"></path></svg>
<div class="a" style="left:332.8px;top:397.3px;width:12.2px;height:11.3px;background:#343434;"></div>
<div class="a" style="left:346px;top:397.3px;width:318.5px;height:11.3px;background:#363636;"></div>
<div class="a" style="left:664.5px;top:397.3px;width:4px;height:11.3px;background:#2a2a2a;"></div>
<div class="a" style="left:345px;top:348px;width:1px;height:61px;background:#171717;"></div>
<div class="a" style="left:2px;top:372.3px;width:343px;height:0.9px;background:#1e1e1e;"></div>
<div class="a" style="left:346.5px;top:347.7px;width:318px;height:9.8px;background:#6e6e6e;"></div>
<svg style="left:346px;top:347.7px;" width="4.5" height="9.8" viewBox="0 0 4.5 9.8"><path d="M4.5 0 V9.8 H2.5 A2.5 2.5 0 0 1 0 7.3 V2.5 A2.5 2.5 0 0 1 2.5 0 Z" fill="#2d8ceb"></path></svg>
<svg style="left:662.8px;top:347.7px;" width="4.5" height="9.8" viewBox="0 0 4.5 9.8"><path d="M0 0 V9.8 H2 A2.5 2.5 0 0 0 4.5 7.3 V2.5 A2.5 2.5 0 0 0 2 0 Z" fill="#2d8ceb"></path></svg>
<div class="a" style="left:350px;top:357.8px;width:313.5px;height:2px;background:#24b024;"></div>
<div class="a" style="left:422.8px;top:361.6px;width:66.6px;height:10.4px;background:#b54848;border-left:1px solid #d8a0a0;border-top:1px solid #c46060"></div>
<div class="a" style="left:422.8px;top:373.8px;width:66px;height:10px;background:#5a67a8;"></div>
<div class="a" style="left:349.8px;top:385.9px;width:66.3px;height:10.4px;background:#8a4242;"></div>
<div class="a" style="left:349.8px;top:397.9px;width:66.3px;height:10.4px;background:#5a67a8;"></div>
<div class="a" style="left:433px;top:347px;width:1px;height:61.5px;background:#4b8fd6;"></div>
<svg style="left:430px;top:338.5px;" width="7" height="8" viewBox="0 0 7 8"><path d="M0 0 H7 V4.5 L3.5 7.8 L0 4.5 Z" fill="#3a8ee6"></path></svg>
<svg style="left:669.5px;top:348.7px;" width="7.8" height="9.7" viewBox="0 0 7.8 9.7"><path d="M0 0 H7.8 V6.5 L3.9 9.7 L0 6.5 Z" fill="#c8c8c8"></path></svg>
<svg style="left:669px;top:363px;" width="8.5" height="8" viewBox="0 0 8.5 8"><path d="M0.3 4 L4 0.5 H8 V7.5 H4 Z" fill="none" stroke="#c6c6c6" stroke-width="1"></path><rect x="4" y="2.5" width="4" height="3" fill="#c6c6c6"></rect></svg>
<div class="a" style="left:668.7px;top:373px;width:8.6px;height:35px;background:#2c2c2c;border-radius:4px"></div>
<div class="a" style="left:1.5px;top:409.5px;width:678.5px;height:11.5px;background:#232323;"></div>
<svg style="left:5.8px;top:411.3px;" width="8" height="8" viewBox="0 0 8 8"><path d="M0.5 2 L3.5 0.5 L7.5 3.5 L7 7.5 L3.5 7.5 L0.5 4.5 Z" fill="#234f80" stroke="#3f82c8" stroke-width="0.9"></path><path d="M3.5 4 L5.5 4.5 L5.2 6" stroke="#3f82c8" stroke-width="0.7" fill="none"></path></svg>
<svg style="left:17.5px;top:411.3px;" width="8" height="8" viewBox="0 0 8 8"><circle cx="3" cy="3" r="2.5" fill="none" stroke="#c6c6c6" stroke-width="1"></circle><rect x="3.5" y="3.5" width="4" height="4" fill="#c6c6c6"></rect></svg>
<svg style="left:29.4px;top:411.3px;" width="7.5" height="8" viewBox="0 0 7.5 8"><path d="M2 0.5 H5.5 L7 2.5 L5.5 4 L7 5.5 L5.5 7.5 H2 L0.5 5.5 L2 4 L0.5 2.5 Z" fill="#b8b8b8"></path></svg>
<div class="a" style="left:173.2px;top:410.6px;width:84.8px;height:8.7px;background:#1c1c1c;border-radius:2px;border:1px solid #262626"></div>
<div class="t" style="color: rgb(138, 138, 138); font-size: 8.6px; left: 189.334px; top: 410.72px; transform: scaleX(0.774844);">スイッチ / モード</div>
<svg style="left:348.7px;top:413px;" width="6.3" height="3.2" viewBox="0 0 6.3 3.2"><path d="M0 3.2 L3 0 L6.3 3.2 Z" fill="#c8c8c8"></path></svg>
<div class="a" style="left:369px;top:414.8px;width:23px;height:0.9px;background:#555;"></div>
<svg style="left:362.2px;top:412px;" width="6.6" height="7" viewBox="0 0 6.6 7"><circle cx="3.3" cy="3.5" r="2.7" fill="#1f1f1f" stroke="#c8c8c8" stroke-width="1.1"></circle></svg>
<svg style="left:400.7px;top:412.6px;" width="11.2" height="5" viewBox="0 0 11.2 5"><path d="M0 5 L3.5 0.8 L5.6 3 L7.5 0 L11.2 5 Z" fill="#c8c8c8"></path></svg>

</body></html>
